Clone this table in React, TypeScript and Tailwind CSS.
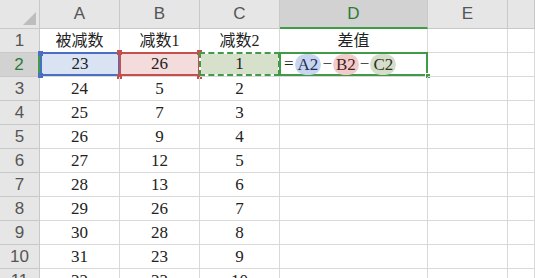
import React from 'react';

const cols = ['A', 'B', 'C', 'D', 'E', ''];

const data: (string | number)[][] = [
    ['被减数', '减数1', '减数2', '差值'],
    [23, 26, 1],
    [24, 5, 2],
    [25, 7, 3],
    [26, 9, 4],
    [27, 12, 5],
    [28, 13, 6],
    [29, 26, 7],
    [30, 28, 8],
    [31, 23, 9],
    [32, 33, 10],
];

const headFont = { fontFamily: '"Liberation Sans", "Noto Sans", sans-serif' };
const cellFont = { fontFamily: '"Liberation Serif", "Noto Sans CJK SC", serif' };

function Handle({ pos, color }: { pos: string; color: string }) {
    return <span className={`absolute w-[5px] h-[5px] ${pos} ${color}`}></span>;
}

function Formula() {
    return (
        <div className="flex items-center h-full pl-[3px] text-[17px] text-[#222]" style={cellFont}>
            <span>=</span>
            <span className="ml-[1px] px-[3px] h-[21px] leading-[21px] rounded-full bg-[#c7d5f1] text-[#1f2f55]">A2</span>
            <span className="px-[1px]">−</span>
            <span className="px-[3px] h-[21px] leading-[21px] rounded-full bg-[#f1cccb] text-[#4a1f1f]">B2</span>
            <span className="px-[1px]">−</span>
            <span className="px-[3px] h-[21px] leading-[21px] rounded-full bg-[#d6ddca] text-[#2a3320]">C2</span>
        </div>
    );
}

export default function App() {
    return (
        <div className="w-[535px] h-[278px] overflow-hidden bg-white">
            <div className="grid grid-cols-[40px_80px_80px_80px_148px_80px_1fr]">
                {/* corner */}
                <div className="h-[29px] bg-[#e6e6e6] border-r border-b border-[#c8c8c8] relative">
                    <svg className="absolute right-[3px] bottom-[3px]" width="13" height="13" viewBox="0 0 13 13">
                        <polygon points="13,0 13,13 0,13" fill="#bdbdbd" />
                    </svg>
                </div>
                {cols.map((c) => (
                    <div
                        key={'h' + c}
                        style={headFont}
                        className={
                            c === 'D'
                                ? 'h-[29px] bg-[#d2d2d2] border-r border-[#c8c8c8] border-b-2 border-b-[#3f9b45] flex items-center justify-center text-[17px] text-[#2f7a37]'
                                : 'h-[29px] bg-[#e6e6e6] border-r border-b border-[#c8c8c8] flex items-center justify-center text-[17px] text-[#555]'
                        }
                    >
                        {c}
                    </div>
                ))}

                {data.map((row, i) => {
                    const r = i + 1;
                    return (
                        <React.Fragment key={r}>
                            <div
                                style={headFont}
                                className={
                                    r === 2
                                        ? 'h-6 bg-[#d2d2d2] border-b border-[#c8c8c8] border-r-2 border-r-[#3f9b45] flex items-center justify-center text-[17px] text-[#2f7a37]'
                                        : 'h-6 bg-[#e6e6e6] border-r border-b border-[#c8c8c8] flex items-center justify-center text-[17px] text-[#555]'
                                }
                            >
                                {r}
                            </div>
                            {[0, 1, 2, 3, 4, 5].map((ci) => {
                                const v = row[ci];
                                const base = 'h-6 border-r border-b border-[#d9d9d9] relative';
                                const txt = typeof v === 'string' ? 'text-[16px]' : 'text-[17px]';
                                if (r === 2 && ci === 0) {
                                    return (
                                        <div key={ci} className={base}>
                                            <div className="absolute top-[-1px] left-0 right-[-1px] bottom-0 border-2 border-[#4a6fc1] bg-[#dae3f4] flex items-center justify-center text-[17px] text-[#222]" style={cellFont}>
                                                {v}
                                            </div>
                                            <Handle pos="top-[-2px] left-[-2px]" color="bg-[#4a6fc1]" />
                                            <Handle pos="bottom-[-2px] left-[-2px]" color="bg-[#4a6fc1]" />
                                        </div>
                                    );
                                }
                                if (r === 2 && ci === 1) {
                                    return (
                                        <div key={ci} className={base}>
                                            <div className="absolute top-[-1px] left-[-1px] right-[-1px] bottom-0 border-2 border-[#c4504d] bg-[#f3dcdb] flex items-center justify-center text-[17px] text-[#222]" style={cellFont}>
                                                {v}
                                            </div>
                                            <Handle pos="top-[-3px] left-[-3px]" color="bg-[#c4504d]" />
                                            <Handle pos="bottom-[-3px] left-[-3px]" color="bg-[#c4504d]" />
                                            <Handle pos="top-[-3px] right-[-3px]" color="bg-[#c4504d]" />
                                            <Handle pos="bottom-[-3px] right-[-3px]" color="bg-[#c4504d]" />
                                        </div>
                                    );
                                }
                                if (r === 2 && ci === 2) {
                                    return (
                                        <div key={ci} className={base}>
                                            <div className="absolute top-[-1px] left-[-1px] right-[-1px] bottom-0 border-2 border-dashed border-[#3f9b45] bg-white">
                                                <div className="w-full h-full bg-[#d6e0cb] flex items-center justify-center text-[17px] text-[#222]" style={cellFont}>
                                                    {v}
                                                </div>
                                            </div>
                                        </div>
                                    );
                                }
                                if (r === 2 && ci === 3) {
                                    return (
                                        <div key={ci} className={base}>
                                            <div className="absolute top-[-1px] left-[-1px] right-[-1px] bottom-0 border-2 border-[#3f9b45]">
                                                <Formula />
                                            </div>
                                            <span className="absolute right-[-4px] bottom-[-3px] w-[6px] h-[6px] bg-[#3f9b45] border border-white"></span>
                                        </div>
                                    );
                                }
                                return (
                                    <div key={ci} className={`${base} flex items-center justify-center ${txt} text-[#222]`} style={cellFont}>
                                        {v}
                                    </div>
                                );
                            })}
                        </React.Fragment>
                    );
                })}
            </div>
        </div>
    );
}
